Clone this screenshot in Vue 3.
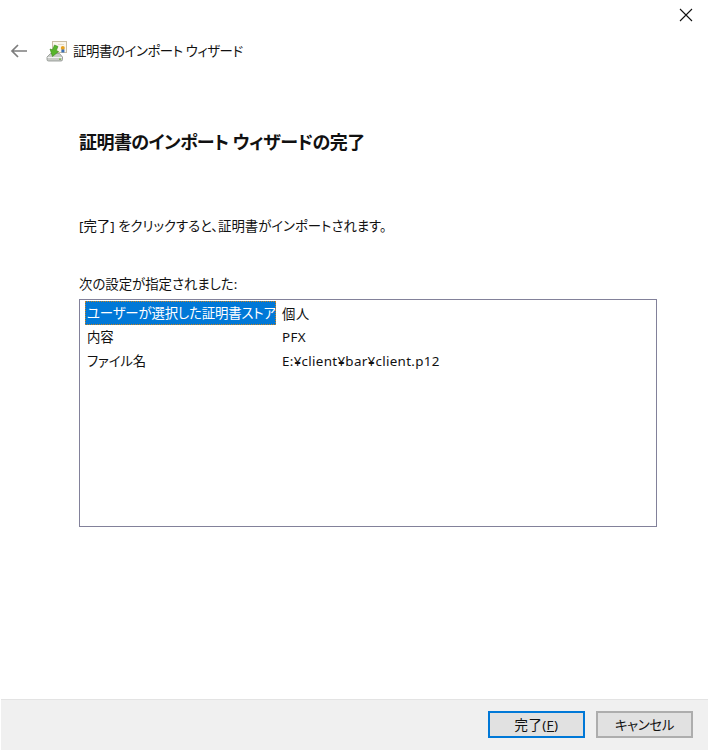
<template>
  <div class="wizard">
    <div class="title-bar">
      <svg class="close" width="14" height="14" viewBox="0 0 14 14">
        <path d="M1 1L13 13M13 1L1 13" stroke="#111" stroke-width="1.1" fill="none" />
      </svg>
    </div>

    <div class="nav">
      <svg class="back" width="18" height="14" viewBox="0 0 18 14">
        <path d="M17 7H2M8 1L2 7L8 13" stroke="#7d7d7d" stroke-width="1.7" fill="none" />
      </svg>
      <svg class="wizard-icon" width="22" height="22" viewBox="0 0 22 22">
        <rect x="6.5" y="1.5" width="14" height="11" fill="#faf6ec" stroke="#c9bda4" />
        <path d="M12 4.5H18" stroke="#e2dac8" stroke-width="1" />
        <circle cx="16.8" cy="8" r="2" fill="#e8a11c" />
        <rect x="15.4" y="9.5" width="3" height="3" fill="#3a6fb5" />
        <path d="M1 17L4.5 13.5H13.5L16.5 17V19.5Q16.5 21 15 21H2.5Q1 21 1 19.5Z" fill="#c9ccc8" stroke="#8c918c" stroke-width=".8" />
        <path d="M1.5 17.5H16" stroke="#f2f2f2" stroke-width="1" />
        <circle cx="14" cy="19.2" r=".9" fill="#6fbf3f" />
        <path d="M8.5 5L12 6.5L10.3 10.5L12.6 11.5L6.5 16.5L4 9L6.5 9.8Z" fill="#57b52c" stroke="#3d8a1c" stroke-width=".6" />
      </svg>
      <span class="nav-title">証明書のインポート ウィザード</span>
    </div>

    <main class="content">
      <h1 class="heading">証明書のインポート ウィザードの完了</h1>
      <p class="intro">[完了] をクリックすると、証明書がインポートされます。</p>
      <p class="list-label">次の設定が指定されました:</p>
      <div class="list">
        <div v-for="(row, index) in rows" :key="row.name" class="row">
          <span class="name" :class="{ selected: index === 0 }">{{ row.name }}</span>
          <span class="value">{{ row.value }}</span>
        </div>
      </div>
    </main>

    <footer class="footer">
      <button class="btn primary">完了(<u>F</u>)</button>
      <button class="btn cancel">キャンセル</button>
    </footer>
  </div>
</template>

<script setup>
const rows = [
  { name: 'ユーザーが選択した証明書ストア', value: '個人' },
  { name: '内容', value: 'PFX' },
  { name: 'ファイル名', value: 'E:¥client¥bar¥client.p12' },
]
</script>

<style>
html,
body {
  margin: 0;
  background: #fff;
}
</style>

<style scoped>
.wizard {
  width: 708px;
  height: 751px;
  display: flex;
  flex-direction: column;
  box-sizing: border-box;
  padding-left: 1px;
  background: #fff;
  color: #111;
  font-family: "Noto Sans", "Noto Sans CJK JP", sans-serif;
  font-size: 13.4px;
  font-feature-settings: "palt";
}

.title-bar {
  height: 33px;
  display: flex;
  justify-content: flex-end;
  align-items: flex-start;
  padding: 8px 15px 0 0;
  box-sizing: border-box;
}

.nav {
  height: 36px;
  display: flex;
  align-items: center;
  padding-left: 9px;
}

.back {
  margin-right: 18px;
}

.wizard-icon {
  margin-right: 5px;
}

.nav-title {
  letter-spacing: -0.4px;
  margin-top: -2px;
}

.content {
  flex: 1;
  padding: 0 51px 0 78px;
}

.heading {
  margin: 58px 0 0;
  font-size: 18px;
  line-height: 30px;
  font-weight: 700;
  letter-spacing: -0.55px;
}

.intro {
  margin: 57px 0 0;
  line-height: 24px;
}

.list-label {
  margin: 34px 0 0;
  line-height: 24px;
}

.list {
  margin-top: 3px;
  height: 228px;
  box-sizing: border-box;
  border: 1px solid #82819a;
  padding: 1px 5px;
}

.row {
  height: 24px;
  display: flex;
  align-items: center;
}

.name {
  width: 191px;
  box-sizing: border-box;
  margin-right: 6px;
  padding: 0 2px;
  line-height: 24px;
  white-space: nowrap;
  letter-spacing: -0.15px;
}

.value {
  letter-spacing: 0.3px;
}

.selected {
  background: #0078d7;
  color: #fff;
  outline: 1px dotted #c9831f;
  outline-offset: -1px;
}

.footer {
  height: 52px;
  display: flex;
  justify-content: flex-end;
  gap: 11px;
  padding: 11px 15px 0 0;
  box-sizing: border-box;
  background: #f0f0f0;
  border-top: 1px solid #e3e3e3;
  border-bottom: 1px solid #fff;
}

.btn {
  width: 97px;
  height: 27px;
  box-sizing: border-box;
  border: 2px solid #adadad;
  background: #e1e1e1;
  color: #111;
  font: inherit;
  padding: 0 0 2px;
}

.cancel {
  letter-spacing: -0.3px;
}

.primary {
  border-color: #0078d7;
  letter-spacing: 0.4px;
}
</style>
